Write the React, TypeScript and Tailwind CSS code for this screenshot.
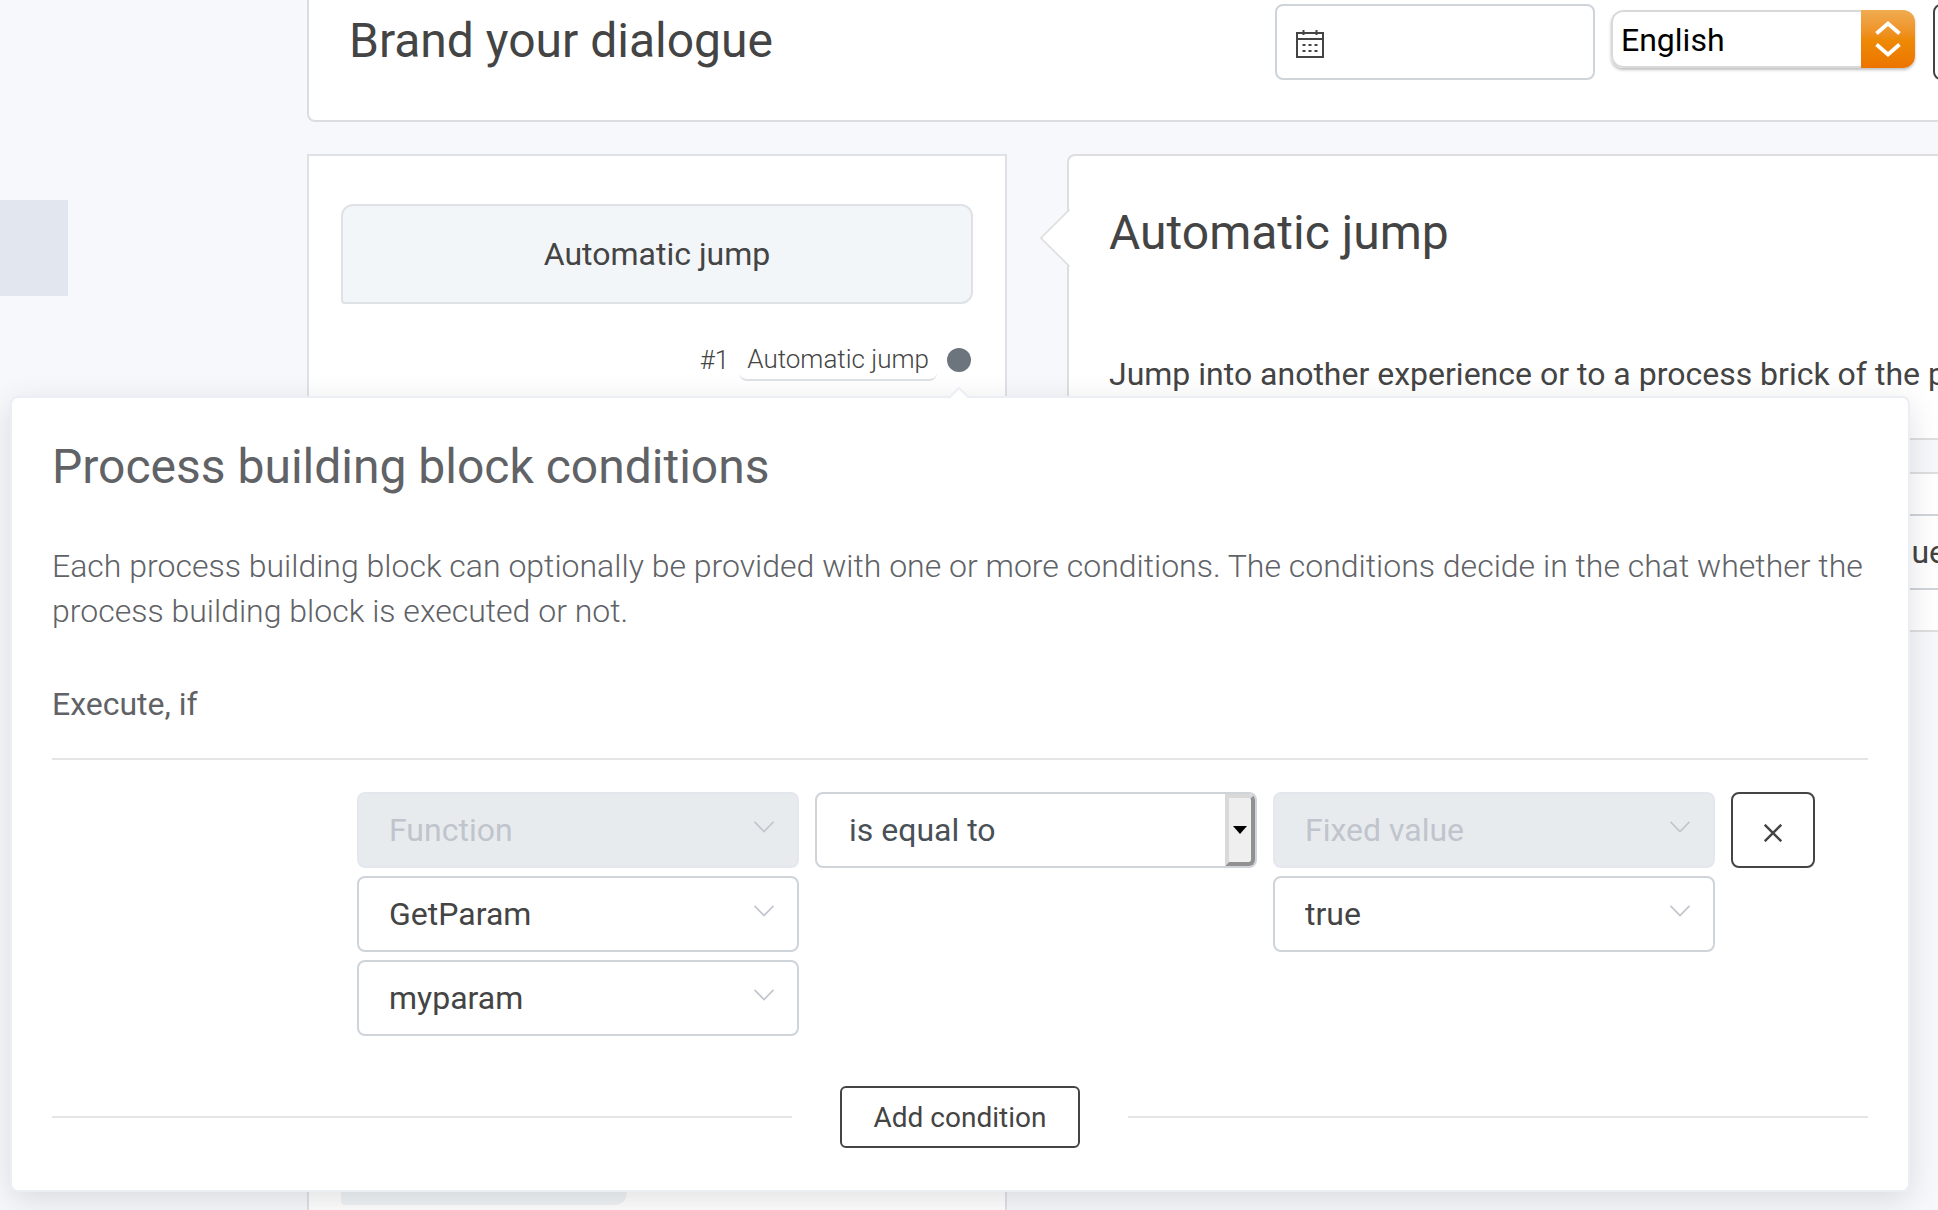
import type { ReactNode } from "react";

function Chevron() {
  return (
    <svg
      viewBox="0 0 20 12"
      className="pointer-events-none absolute top-[29px] right-[25px] h-3 w-5 fill-none stroke-[#c0c4cc] stroke-[1.6]"
      aria-hidden="true"
    >
      <path d="M0.5 0.8 10 10.5 19.5 0.8" />
    </svg>
  );
}

function Combo({ label, value, disabled = false }: { label: string; value: string; disabled?: boolean }) {
  return (
    <div className="relative">
      <select
        aria-label={label}
        disabled={disabled}
        defaultValue={value}
        className="block h-[76px] w-full appearance-none rounded-lg border-2 border-[#ced4da] bg-white px-[30px] text-[32px] text-[#444] disabled:border-[#e4e7ed] disabled:bg-[#e8ebee] disabled:text-[#c0c4cc] disabled:opacity-100"
      >
        <option>{value}</option>
      </select>
      <Chevron />
    </div>
  );
}

function OperatorSelect() {
  return (
    <div className="relative">
      <select
        aria-label="Operator"
        defaultValue="is equal to"
        className="block h-[76px] w-full appearance-none rounded-lg border-2 border-[#ced4da] bg-white px-8 text-[32px] text-[#495057]"
      >
        <option>is equal to</option>
      </select>
      <span className="pointer-events-none absolute inset-y-[2px] right-[2px] flex w-[30px] items-center justify-center rounded-r-md border-4 border-t-[#d9d9d9] border-r-[#919191] border-b-[#919191] border-l-[#d9d9d9] bg-[#efefef]">
        <svg viewBox="0 0 14 8" className="h-2 w-[14px] shrink-0 fill-black" aria-hidden="true">
          <path d="M0 0H14L7 8Z" />
        </svg>
      </span>
    </div>
  );
}

function ConditionColumn({ children }: { children: ReactNode }) {
  return <div className="flex min-w-0 flex-1 flex-col gap-2">{children}</div>;
}

function ConditionsDialog() {
  return (
    <section
      role="dialog"
      aria-labelledby="conditions-title"
      className="absolute top-[396px] right-7 left-[10px] rounded-lg border-2 border-[#ebeef5] bg-white px-10 pt-10 pb-[42px] text-[#606266] shadow-[0_8px_32px_rgba(0,0,0,0.12)]"
    >
      <svg viewBox="0 0 24 12" className="absolute -top-[11px] left-[935px] h-3 w-6" aria-hidden="true">
        <path d="M1 12 12 1 23 12Z" className="fill-white" />
        <path d="M2 11 12 1 22 11" className="fill-none stroke-[#ebeef5] stroke-2" />
      </svg>
      <h2 id="conditions-title" className="text-[48px] leading-[58px] font-normal">
        Process building block conditions
      </h2>
      <p className="mt-12 text-[32px] leading-[45px] font-light">
        Each process building block can optionally be provided with one or more conditions. The conditions decide in the
        chat whether the process building block is executed or not.
      </p>
      <h3 className="mt-12 text-[32px] leading-[45px] font-normal">Execute, if</h3>
      <hr className="mt-[31px] border-t-2 border-[#e5e5e5]" />
      <div className="mt-8 mr-[53px] ml-[305px] flex items-start gap-4">
        <ConditionColumn>
          <Combo label="Source type" value="Function" disabled />
          <Combo label="Function" value="GetParam" />
          <Combo label="Parameter" value="myparam" />
        </ConditionColumn>
        <ConditionColumn>
          <OperatorSelect />
        </ConditionColumn>
        <ConditionColumn>
          <Combo label="Comparison type" value="Fixed value" disabled />
          <Combo label="Comparison value" value="true" />
        </ConditionColumn>
        <button
          type="button"
          aria-label="Remove condition"
          className="flex h-[76px] w-[84px] shrink-0 items-center justify-center rounded-lg border-2 border-[#444] bg-white pt-1.5"
        >
          <svg viewBox="0 0 18 18" className="size-[18px] fill-none stroke-[#444] stroke-[2.4]" aria-hidden="true">
            <path d="M0.7 0.7 17.3 17.3M17.3 0.7 0.7 17.3" />
          </svg>
        </button>
      </div>
      <div className="mt-[50px] flex items-center gap-12">
        <hr className="flex-1 border-t-2 border-[#e5e5e5]" />
        <button
          type="button"
          className="h-[62px] w-60 rounded-md border-2 border-[#444] bg-white pt-0.5 text-[28px] leading-[34px] text-[#444]"
        >
          Add condition
        </button>
        <hr className="flex-1 border-t-2 border-[#e5e5e5]" />
      </div>
    </section>
  );
}

function CalendarIcon() {
  return (
    <svg
      viewBox="0 0 28 28"
      className="pointer-events-none absolute top-[26px] left-[21px] size-7 fill-none stroke-[#444] stroke-2"
      aria-hidden="true"
    >
      <path d="M1 3H27V27H1ZM1 9H27M7.5 0V5M20.5 0V5" />
      <path d="M6.5 15H9.5M12.5 15H15.5M18.5 15H21.5M6.5 21H9.5M12.5 21H15.5M18.5 21H21.5" />
    </svg>
  );
}

function Header() {
  return (
    <header className="flex items-start overflow-hidden rounded-bl-lg border-b-2 border-l-2 border-[#dcdde0] bg-white pt-1 pb-10 pl-10">
      <h1 className="mt-2 flex-1 text-[48px] leading-[58px] font-normal">Brand your dialogue</h1>
      <div className="relative w-80 shrink-0">
        <input
          type="text"
          aria-label="Date"
          className="block h-[76px] w-full rounded-lg border-2 border-[#ced4da] bg-white pr-4 pl-16 text-[32px]"
        />
        <CalendarIcon />
      </div>
      <div className="relative mt-[6px] ml-4 h-[58px] w-[304px] shrink-0 overflow-hidden rounded-xl shadow-[0_2px_3px_rgba(0,0,0,0.25)]">
        <select
          aria-label="Language"
          defaultValue="English"
          className="block h-full w-full appearance-none rounded-xl border-2 border-[#d9d9d9] bg-white pt-0.5 pl-2 text-[32px] text-black"
        >
          <option>English</option>
        </select>
        <span className="pointer-events-none absolute inset-y-0 right-0 flex w-[54px] items-center justify-center bg-linear-to-b from-[#f0ac50] via-[#ee8a06] to-[#ec7400]">
          <svg viewBox="0 0 26 36" className="h-9 w-[26px] fill-none stroke-white stroke-[3.8]" aria-hidden="true">
            <path d="M1.5 12.5 13 2.5 24.5 12.5M1.5 23.5 13 33.5 24.5 23.5" />
          </svg>
        </span>
      </div>
      <button
        type="button"
        aria-label="More"
        className="-mr-[79px] ml-[18px] h-[76px] w-[84px] shrink-0 rounded-lg border-2 border-[#444] bg-white"
      />
    </header>
  );
}

function ProcessCard() {
  return (
    <section className="flex w-[700px] shrink-0 flex-col border-2 border-b-0 border-[#dee2e6] bg-white px-8 pt-12">
      <button
        type="button"
        className="h-[100px] shrink-0 rounded-xl rounded-bl-sm border-2 border-[#dee2e6] bg-[#f3f6f9] text-[32px]"
      >
        Automatic jump
      </button>
      <div className="mt-[35px] flex items-center justify-end gap-[10px] pr-[2px] text-[26px] leading-10 font-light">
        <span>#1</span>
        <span className="rounded-b-lg border-b-2 border-[#dee2e6] px-2">Automatic jump</span>
        <span className="size-6 rounded-full bg-[#6c757d]" />
      </div>
      <div className="mt-auto mb-[5px] h-[100px] w-[286px] rounded-xl rounded-bl-sm bg-[#f0f4f7]" />
    </section>
  );
}

function DetailCards() {
  return (
    <div className="min-w-0 flex-1">
      <section className="relative rounded-tl-lg border-y-2 border-l-2 border-[#dedede] bg-white pt-12 pb-[41px] pl-10">
        <svg viewBox="0 0 30 60" className="absolute top-[52px] -left-[29px] h-[60px] w-[30px]" aria-hidden="true">
          <path d="M30 1 1 30 30 59Z" className="fill-white" />
          <path d="M29.5 1.5 1 30 29.5 58.5" className="fill-none stroke-[#dedede] stroke-[1.6]" />
        </svg>
        <h2 className="text-[48px] leading-[58px] font-normal">Automatic jump</h2>
        <p className="mt-[90px] overflow-hidden text-[32px] leading-[45px] whitespace-nowrap">
          Jump into another experience or to a process brick of the p
        </p>
      </section>
      <section className="mt-8 border-y-2 border-l-2 border-[#dedede] bg-white py-10 pl-10">
        <div className="-mr-2">
          <input
            type="text"
            aria-label="Target"
            defaultValue="ue"
            className="block h-[76px] w-full border-y-2 border-[#ced4da] bg-white text-right text-[32px]"
          />
        </div>
      </section>
    </div>
  );
}

export default function App() {
  return (
    <div className="relative flex min-h-screen overflow-hidden bg-[#f7f8fc] font-['Roboto',sans-serif] text-[#444]">
      <aside className="w-[307px] shrink-0 pt-[200px]">
        <div className="h-24 w-[68px] bg-[#e2e7ef]" />
      </aside>
      <div className="flex min-w-0 flex-1 flex-col">
        <Header />
        <main className="mt-8 flex flex-1 gap-[60px]">
          <ProcessCard />
          <DetailCards />
        </main>
      </div>
      <ConditionsDialog />
    </div>
  );
}
